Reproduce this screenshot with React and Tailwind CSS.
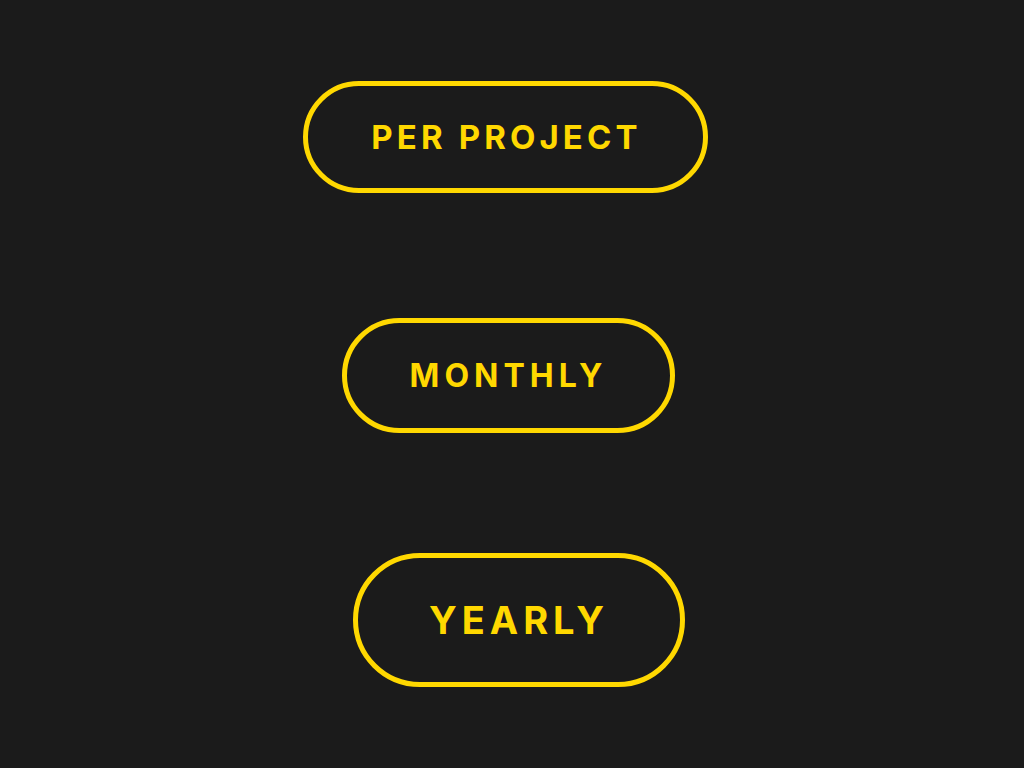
const plans = [
  { label: "PER PROJECT", box: "ml-[303px] mt-[81px] w-[405px] h-[112px]", text: "text-[33px] tracking-[4.1px] pl-[2px]" },
  { label: "MONTHLY", box: "ml-[342px] mt-[125px] w-[333px] h-[115px]", text: "text-[32px] tracking-[5px]" },
  { label: "YEARLY", box: "ml-[353px] mt-[120px] w-[332px] h-[134px]", text: "text-[38px] tracking-[5px]" },
];

export default function App() {
  return (
    <div
      className="flex min-h-screen w-full flex-col items-start bg-[#1b1b1b]"
      style={{ fontFamily: "Inter, 'Open Sans', sans-serif" }}
    >
      {plans.map((plan) => (
        <button
          key={plan.label}
          className={`${plan.box} flex items-center justify-center rounded-full border-[5px] border-[#ffd800] bg-transparent`}
        >
          <span className={`${plan.text} font-bold leading-none text-[#ffd800]`}>
            {plan.label}
          </span>
        </button>
      ))}
    </div>
  );
}
